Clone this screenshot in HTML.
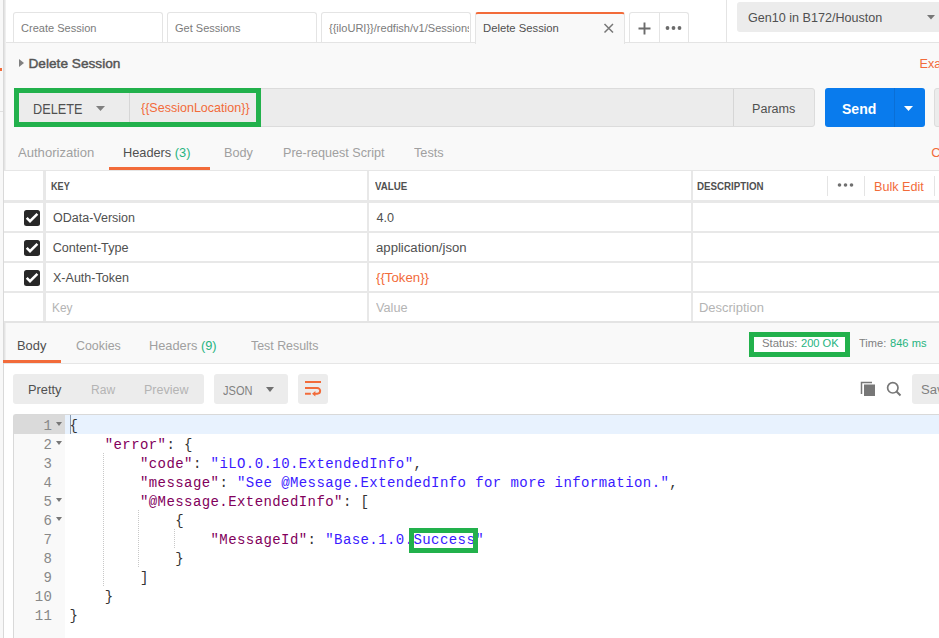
<!DOCTYPE html>
<html><head><meta charset="utf-8">
<style>
*{box-sizing:border-box;margin:0;padding:0}
html,body{width:939px;height:638px;overflow:hidden;background:#f9f9f9;font-family:"Liberation Sans",sans-serif}
.a{position:absolute}
.t{position:absolute;white-space:nowrap;line-height:normal}
#hdr{left:0;top:0;width:939px;height:43px;background:#fff;border-bottom:1px solid #e4e4e4}
.tab{position:absolute;top:12px;height:30px;background:#fff;border:1px solid #e4e4e4;border-bottom:none;border-radius:3px 3px 0 0;overflow:hidden}
.tab span{position:absolute;left:8px;top:9px;font-size:11px;color:#808080;white-space:nowrap;line-height:normal}
.gray{color:#a6a6a6}
.dk{color:#505050}
.or{color:#f26b3a}
.gr{color:#26b47f}
.green{position:absolute;border:5px solid #22b14c}
.code{font-family:"Liberation Mono",monospace;font-size:14px;letter-spacing:0.42px;line-height:19px;white-space:pre;position:absolute}
.k{color:#82005c}
.s{color:#3a1aff}
.p{color:#333}
</style></head><body>
<!-- header -->
<div id="hdr" class="a"></div>
<div class="a" style="left:0;top:0;width:3px;height:638px;background:#f8f8f8"></div>
<div class="a" style="left:3px;top:0;width:1px;height:638px;background:#d9d9d9"></div>
<div class="a" style="left:4px;top:0;width:1px;height:638px;background:#e4e4e4"></div>
<div class="a" style="left:5px;top:0;width:1px;height:638px;background:#efefef"></div>
<div class="a" style="left:0;top:68px;width:2px;height:3px;background:#f26b3a"></div>
<div class="a" style="left:0;top:111px;width:3px;height:1px;background:#e0e0e0"></div>

<div class="tab" style="left:13px;width:150px"></div>
<div class="tab" style="left:167px;width:150px"></div>
<div class="tab" style="left:321px;width:150px"></div>
<div class="tab" style="left:475px;width:150px;background:#f9f9f9;border-top:2px solid #f26b3a;height:32px"></div>
<div class="tab" style="left:629px;width:60px"></div>
<!-- close x -->
<svg class="a" style="left:603px;top:23px" width="11" height="11" viewBox="0 0 11 11"><path d="M1.5 1L10 9.5M10 1L1.5 9.5" stroke="#777" stroke-width="1.5"/></svg>
<div class="a" style="left:659px;top:13px;width:1px;height:30px;background:#e4e4e4"></div>
<svg class="a" style="left:638px;top:22px" width="13" height="13" viewBox="0 0 13 13"><path d="M6.5 0.5V12.5M0.5 6.5H12.5" stroke="#6b6b6b" stroke-width="1.9"/></svg>
<svg class="a" style="left:665px;top:25px" width="18" height="6" viewBox="0 0 18 6"><circle cx="2.5" cy="3" r="1.9" fill="#6b6b6b"/><circle cx="8.5" cy="3" r="1.9" fill="#6b6b6b"/><circle cx="14.5" cy="3" r="1.9" fill="#6b6b6b"/></svg>
<div class="a" style="left:726px;top:0;width:1px;height:43px;background:#e4e4e4"></div>
<div class="a" style="left:737px;top:2px;width:210px;height:30px;background:#ececec;border-radius:3px"></div>
<svg class="a" style="left:927px;top:15px" width="8" height="5" viewBox="0 0 8 5"><path d="M0 0H8L4 4.6Z" fill="#777"/></svg>

<!-- title row -->
<svg class="a" style="left:19px;top:59px" width="5" height="8" viewBox="0 0 5 8"><path d="M0 0L5 4L0 8Z" fill="#808080"/></svg>

<!-- request bar -->
<div class="a" style="left:14px;top:88px;width:801px;height:39px;background:#ececec;border:1px solid #dcdcdc;border-radius:3px"></div>
<div class="a" style="left:129px;top:89px;width:1px;height:37px;background:#d6d6d6"></div>
<div class="a" style="left:733px;top:89px;width:1px;height:37px;background:#d6d6d6"></div>
<svg class="a" style="left:96px;top:106px" width="9" height="5" viewBox="0 0 9 5"><path d="M0 0H9L4.5 5Z" fill="#808080"/></svg>
<div class="a" style="left:825px;top:88px;width:100px;height:39px;background:#097bed;border-radius:3px"></div>
<div class="a" style="left:894px;top:88px;width:1px;height:39px;background:#0a6fd6"></div>
<svg class="a" style="left:904px;top:106px" width="9" height="5" viewBox="0 0 9 5"><path d="M0 0H9L4.5 5Z" fill="#fff"/></svg>
<div class="a" style="left:934px;top:88px;width:10px;height:39px;background:#ececec;border:1px solid #dcdcdc;border-radius:3px"></div>
<div class="green" style="left:14px;top:88px;width:247px;height:39px"></div>

<!-- request tabs -->
<div class="a" style="left:109px;top:167px;width:101px;height:3px;background:#f26b3a"></div>

<!-- table -->
<div class="a" style="left:4px;top:170px;width:935px;height:152px;background:#fff;border-top:1px solid #e6e6e6"></div>

<div class="a" style="left:43px;top:171px;width:3px;height:151px;background:#e8e8e8"></div>
<div class="a" style="left:367px;top:171px;width:2px;height:151px;background:#e8e8e8"></div>
<div class="a" style="left:691px;top:171px;width:2px;height:151px;background:#e8e8e8"></div>
<div class="a" style="left:4px;top:200px;width:935px;height:3px;background:#e8e8e8"></div>
<div class="a" style="left:4px;top:231px;width:935px;height:2px;background:#e8e8e8"></div>
<div class="a" style="left:4px;top:261px;width:935px;height:2px;background:#e8e8e8"></div>
<div class="a" style="left:4px;top:291px;width:935px;height:2px;background:#e8e8e8"></div>
<div class="a" style="left:4px;top:321px;width:935px;height:2px;background:#e4e4e4"></div>
<div class="a" style="left:827px;top:176px;width:1px;height:20px;background:#e4e4e4"></div>
<div class="a" style="left:864px;top:176px;width:1px;height:20px;background:#e4e4e4"></div>
<div class="a" style="left:934px;top:176px;width:1px;height:20px;background:#e4e4e4"></div>
<svg class="a" style="left:837px;top:182px" width="17" height="6" viewBox="0 0 17 6"><circle cx="2.5" cy="3" r="1.8" fill="#707070"/><circle cx="8.5" cy="3" r="1.8" fill="#707070"/><circle cx="14.5" cy="3" r="1.8" fill="#707070"/></svg>
<div class="a" style="left:24px;top:210px;width:15.7px;height:15.5px;background:#282828;border-radius:2.5px"></div>
<svg class="a" style="left:24px;top:210px" width="16" height="16" viewBox="0 0 16 16"><path d="M2.7 7.9L6 11.2L13.4 3.8" stroke="#fff" stroke-width="2.5" fill="none"/></svg>
<div class="a" style="left:24px;top:240px;width:15.7px;height:15.5px;background:#282828;border-radius:2.5px"></div>
<svg class="a" style="left:24px;top:240px" width="16" height="16" viewBox="0 0 16 16"><path d="M2.7 7.9L6 11.2L13.4 3.8" stroke="#fff" stroke-width="2.5" fill="none"/></svg>
<div class="a" style="left:24px;top:270px;width:15.7px;height:15.5px;background:#282828;border-radius:2.5px"></div>
<svg class="a" style="left:24px;top:270px" width="16" height="16" viewBox="0 0 16 16"><path d="M2.7 7.9L6 11.2L13.4 3.8" stroke="#fff" stroke-width="2.5" fill="none"/></svg>

<!-- response -->
<div class="a" style="left:4px;top:364px;width:935px;height:274px;background:#fff"></div>
<div class="a" style="left:4px;top:363px;width:935px;height:1px;background:#e6e6e6"></div>
<div class="a" style="left:3px;top:360px;width:58px;height:3px;background:#f26b3a"></div>
<div class="a" style="left:749px;top:332px;width:101px;height:25px;background:#fff"></div>
<div class="green" style="left:749px;top:332px;width:101px;height:25px"></div>

<div class="a" style="left:13px;top:374px;width:191px;height:30px;background:#ececec;border-radius:3px"></div>
<div class="a" style="left:214px;top:374px;width:74px;height:30px;background:#ececec;border-radius:3px"></div>
<svg class="a" style="left:266px;top:387px" width="8" height="5" viewBox="0 0 8 5"><path d="M0 0H8L4 5Z" fill="#707070"/></svg>
<div class="a" style="left:298px;top:374px;width:30px;height:30px;background:#ececec;border-radius:3px"></div>
<svg class="a" style="left:298px;top:374px" width="30" height="30" viewBox="0 0 30 30"><path d="M7 7.9H23M7 14H19.3A2.85 2.85 0 0 1 19.3 19.7H16.5M7 19.7H12.8" stroke="#f26b3a" stroke-width="2" fill="none"/><path d="M17.4 16.9L14 19.7L17.4 22.5Z" fill="#f26b3a"/></svg>

<svg class="a" style="left:860px;top:381px" width="16" height="16" viewBox="0 0 16 16"><path d="M1.5 13V1.5H12" stroke="#777" stroke-width="1.5" fill="none"/><rect x="4" y="3.5" width="11" height="11.5" fill="#777"/></svg>
<svg class="a" style="left:886px;top:381px" width="16" height="16" viewBox="0 0 16 16"><circle cx="6.8" cy="6.8" r="5.2" stroke="#777" stroke-width="1.7" fill="none"/><path d="M10.5 10.5L14.5 14.5" stroke="#777" stroke-width="1.9"/></svg>
<div class="a" style="left:912px;top:374px;width:40px;height:30px;background:#ececec;border-radius:3px"></div>

<!-- editor -->
<div class="a" style="left:13px;top:414px;width:926px;height:224px;background:#fff;border-top:1px solid #d9d9d9;border-left:1px solid #d9d9d9;border-top-left-radius:3px"></div>
<div class="a" style="left:14px;top:415px;width:51px;height:223px;background:#f9f9f9"></div>
<div class="a" style="left:14px;top:415px;width:51px;height:19px;background:#dadada"></div>
<div class="a" style="left:65px;top:415px;width:874px;height:19px;background:#e8f2fe"></div>
<div class="a" style="left:70px;top:415px;width:1px;height:19px;background:#8a9bb0"></div>

<div class="t" style="left:21.23px;top:21px;font-size:11.63px;font-weight:400;color:#7b7b7b;transform-origin:0 0;transform:scaleX(0.9495)">Create Session</div>
<div class="t" style="left:174.63px;top:21px;font-size:11.63px;font-weight:400;color:#7b7b7b;transform-origin:0 0;transform:scaleX(0.9465)">Get Sessions</div>
<div class="a" style="left:321px;top:0;width:148px;height:43px;overflow:hidden"><div class="t" style="left:7.76px;top:21px;font-size:11.63px;font-weight:400;color:#7b7b7b;transform-origin:0 0;transform:scaleX(0.9495)">{{iloURI}}/redfish/v1/Sessions</div></div>
<div class="t" style="left:482.53px;top:21px;font-size:11.63px;font-weight:400;color:#505050;transform-origin:0 0;transform:scaleX(0.9699)">Delete Session</div>
<div class="t" style="left:747.88px;top:10px;font-size:13.08px;font-weight:400;color:#505050;transform-origin:0 0;transform:scaleX(0.9623)">Gen10 in B172/Houston</div>
<div class="t" style="left:28.50px;top:56px;font-size:13.66px;font-weight:400;color:#555;-webkit-text-stroke:0.45px #555">Delete Session</div>
<div class="t" style="left:919.60px;top:57px;font-size:12.65px;font-weight:400;color:#f26b3a">Examples</div>
<div class="t" style="left:33.49px;top:101px;font-size:14.24px;font-weight:400;color:#505050;transform-origin:0 0;transform:scaleX(0.8916)">DELETE</div>
<div class="t" style="left:140.75px;top:100px;font-size:12.72px;font-weight:400;color:#f26b3a;transform-origin:0 0;transform:scaleX(0.9841)">{{SessionLocation}}</div>
<div class="t" style="left:752.30px;top:102px;font-size:12.65px;font-weight:400;color:#505050;transform-origin:0 0;transform:scaleX(0.9952)">Params</div>
<div class="t" style="left:842.42px;top:101px;font-size:14.53px;font-weight:700;color:#fff;transform-origin:0 0;transform:scaleX(0.9676)">Send</div>
<div class="t" style="left:17.80px;top:145px;font-size:12.94px;font-weight:400;color:#a0a0a0;transform-origin:0 0;transform:scaleX(1.0100)">Authorization</div>
<div class="t" style="left:123.21px;top:145px;font-size:12.94px;font-weight:400;color:#505050;transform-origin:0 0;transform:scaleX(0.9865)">Headers <span style='color:#26b47f'>(3)</span></div>
<div class="t" style="left:224.32px;top:145px;font-size:12.94px;font-weight:400;color:#a0a0a0;transform-origin:0 0;transform:scaleX(0.9805)">Body</div>
<div class="t" style="left:282.53px;top:145px;font-size:12.94px;font-weight:400;color:#a0a0a0;transform-origin:0 0;transform:scaleX(0.9734)">Pre-request Script</div>
<div class="t" style="left:413.75px;top:145px;font-size:12.94px;font-weight:400;color:#a0a0a0;transform-origin:0 0;transform:scaleX(0.9831)">Tests</div>
<div class="t" style="left:931.25px;top:145px;font-size:12.94px;font-weight:400;color:#f26b3a">Cookies</div>
<div class="t" style="left:50.82px;top:181px;font-size:10.03px;font-weight:700;color:#505050;transform-origin:0 0;transform:scaleX(0.9077)">KEY</div>
<div class="t" style="left:374.66px;top:181px;font-size:10.03px;font-weight:700;color:#505050;transform-origin:0 0;transform:scaleX(0.9692)">VALUE</div>
<div class="t" style="left:697.47px;top:181px;font-size:10.03px;font-weight:700;color:#505050;transform-origin:0 0;transform:scaleX(0.9716)">DESCRIPTION</div>
<div class="t" style="left:874.30px;top:180px;font-size:12.65px;font-weight:400;color:#f26b3a;transform-origin:0 0;transform:scaleX(0.9969)">Bulk Edit</div>
<div class="t" style="left:52.91px;top:211px;font-size:12.65px;font-weight:400;color:#505050;transform-origin:0 0;transform:scaleX(0.9890)">OData-Version</div>
<div class="t" style="left:376.55px;top:211px;font-size:12.65px;font-weight:400;color:#505050">4.0</div>
<div class="t" style="left:52.65px;top:241px;font-size:12.65px;font-weight:400;color:#505050">Content-Type</div>
<div class="t" style="left:375.98px;top:241px;font-size:12.65px;font-weight:400;color:#505050;transform-origin:0 0;transform:scaleX(1.0402)">application/json</div>
<div class="t" style="left:52.90px;top:271px;font-size:12.65px;font-weight:400;color:#505050;transform-origin:0 0;transform:scaleX(0.9914)">X-Auth-Token</div>
<div class="t" style="left:376.24px;top:271px;font-size:12.65px;font-weight:400;color:#f26b3a;transform-origin:0 0;transform:scaleX(1.0480)">{{Token}}</div>
<div class="t" style="left:52.46px;top:301px;font-size:12.65px;font-weight:400;color:#b4b4b4;transform-origin:0 0;transform:scaleX(0.9398)">Key</div>
<div class="t" style="left:376.25px;top:301px;font-size:12.65px;font-weight:400;color:#b4b4b4;transform-origin:0 0;transform:scaleX(1.0033)">Value</div>
<div class="t" style="left:699.37px;top:301px;font-size:12.65px;font-weight:400;color:#b4b4b4;transform-origin:0 0;transform:scaleX(1.0260)">Description</div>
<div class="t" style="left:17.31px;top:338px;font-size:12.94px;font-weight:400;color:#505050;transform-origin:0 0;transform:scaleX(0.9947)">Body</div>
<div class="t" style="left:75.88px;top:338px;font-size:12.94px;font-weight:400;color:#a0a0a0;transform-origin:0 0;transform:scaleX(0.9582)">Cookies</div>
<div class="t" style="left:149.41px;top:338px;font-size:12.94px;font-weight:400;color:#a0a0a0;transform-origin:0 0;transform:scaleX(0.9895)">Headers <span style='color:#26b47f'>(9)</span></div>
<div class="t" style="left:251.06px;top:338px;font-size:12.94px;font-weight:400;color:#a0a0a0;transform-origin:0 0;transform:scaleX(0.9577)">Test Results</div>
<div class="t" style="left:761.80px;top:337px;font-size:11.34px;font-weight:400;color:#808080;transform-origin:0 0;transform:scaleX(1.0044)">Status:</div>
<div class="t" style="left:801.01px;top:337px;font-size:11.34px;font-weight:400;color:#26b47f;transform-origin:0 0;transform:scaleX(0.9801)">200 OK</div>
<div class="t" style="left:858.86px;top:337px;font-size:11.34px;font-weight:400;color:#808080;transform-origin:0 0;transform:scaleX(0.9757)">Time:</div>
<div class="t" style="left:890.41px;top:337px;font-size:11.34px;font-weight:400;color:#26b47f;transform-origin:0 0;transform:scaleX(0.9821)">846 ms</div>
<div class="t" style="left:27.62px;top:382px;font-size:13.08px;font-weight:400;color:#505050;transform-origin:0 0;transform:scaleX(0.9788)">Pretty</div>
<div class="t" style="left:90.88px;top:382px;font-size:13.08px;font-weight:400;color:#b4b4b4;transform-origin:0 0;transform:scaleX(0.9200)">Raw</div>
<div class="t" style="left:144.44px;top:382px;font-size:13.08px;font-weight:400;color:#b4b4b4;transform-origin:0 0;transform:scaleX(0.9560)">Preview</div>
<div class="t" style="left:222.99px;top:383px;font-size:13.37px;font-weight:400;color:#808080;transform-origin:0 0;transform:scaleX(0.8263)">JSON</div>
<div class="t" style="left:920.95px;top:382px;font-size:13.08px;font-weight:400;color:#808080">Save</div>
<!-- code -->
<div class="a" style="left:103px;top:453px;width:0;height:133px;border-left:1px dotted #c8c8c8"></div>
<div class="a" style="left:138px;top:510px;width:0;height:57px;border-left:1px dotted #c8c8c8"></div>
<div class="a" style="left:174px;top:529px;width:0;height:19px;border-left:1px dotted #c8c8c8"></div>
<div class="code" style="left:69.4px;top:417px"><span class="p">{</span>
    <span class="k">"error"</span><span class="p">: {</span>
        <span class="k">"code"</span><span class="p">: </span><span class="s">"iLO.0.10.ExtendedInfo"</span><span class="p">,</span>
        <span class="k">"message"</span><span class="p">: </span><span class="s">"See @Message.ExtendedInfo for more information."</span><span class="p">,</span>
        <span class="k">"@Message.ExtendedInfo"</span><span class="p">: [</span>
            <span class="p">{</span>
                <span class="k">"MessageId"</span><span class="p">: </span><span class="s">"Base.1.0.Success"</span>
            <span class="p">}</span>
        <span class="p">]</span>
    <span class="p">}</span>
<span class="p">}</span></div>
<div class="code" style="left:14px;top:417px;width:38.4px;text-align:right;color:#888">1
2
3
4
5
6
7
8
9
10
11</div>
<svg class="a" style="left:56px;top:422px" width="6" height="4" viewBox="0 0 6 4"><path d="M0 0H6L3 4Z" fill="#777"/></svg>
<svg class="a" style="left:56px;top:441px" width="6" height="4" viewBox="0 0 6 4"><path d="M0 0H6L3 4Z" fill="#777"/></svg>
<svg class="a" style="left:56px;top:498px" width="6" height="4" viewBox="0 0 6 4"><path d="M0 0H6L3 4Z" fill="#777"/></svg>
<svg class="a" style="left:56px;top:517px" width="6" height="4" viewBox="0 0 6 4"><path d="M0 0H6L3 4Z" fill="#777"/></svg>
<div class="a" style="left:409px;top:528px;width:69px;height:25px;border:5px solid #22b14c"></div>
</body></html>
